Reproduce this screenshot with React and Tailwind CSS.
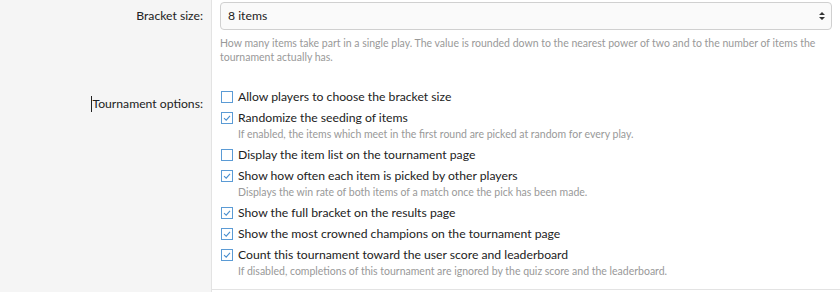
import React from "react";

const Check = ({ checked }) => (
  <span className="mt-[3px] flex h-[12px] w-[12px] shrink-0 items-center justify-center border border-[#5b9bd5] bg-white">
    {checked && (
      <svg width="8" height="8" viewBox="0 0 8 8">
        <path d="M1 4.2 L3.2 6.2 L7 1.8" fill="none" stroke="#4a8fcf" strokeWidth="1.1" />
      </svg>
    )}
  </span>
);

const Option = ({ checked, label, help }) => (
  <div className="flex gap-[5px]">
    <Check checked={checked} />
    <div className="flex flex-col">
      <span className="text-[12.2px] leading-[18px] text-[#222]">{label}</span>
      {help && <span className="pb-[2px] text-[10.5px] leading-[14px] text-[#999]">{help}</span>}
    </div>
  </div>
);

export default function App() {
  return (
    <div className="flex h-[292px] w-[840px] bg-white" style={{ fontFamily: 'Lato, "Open Sans", sans-serif' }}>
      <div className="flex w-[212px] shrink-0 flex-col border-r border-[#e3e3e3] bg-[#f5f5f5] pr-[8px] text-right text-[12.2px] text-[#222]">
        <div className="pt-[7px] leading-[18px]">Bracket size:</div>
        <div className="mt-[70px] flex justify-end leading-[18px]">
          <span className="mt-[1px] h-[16px] w-px bg-[#222]" />
          <span>Tournament options:</span>
        </div>
      </div>
      <div className="flex flex-1 flex-col">
        <div className="flex flex-col px-[8px] pt-[2px]">
          <div className="flex h-[28px] items-center justify-between rounded-[4px] border border-[#d0d0d0] bg-[#fafafa] pl-[7px] pr-[6px] text-[12.2px] text-[#222]">
            <span>8 items</span>
            <svg width="6" height="10" viewBox="0 0 6 10">
              <path d="M0 4 L3 1 L6 4 Z M0 6 L3 9 L6 6 Z" fill="#333" />
            </svg>
          </div>
          <div className="mt-[6px] text-[10.5px] leading-[14px] text-[#999]">
            How many items take part in a single play. The value is rounded down to the nearest power of two and to the number of items the tournament actually has.
          </div>
        </div>
        <div className="mt-[24px] flex flex-col gap-[3px] px-[9px]">
          <Option label="Allow players to choose the bracket size" />
          <Option checked label="Randomize the seeding of items" help="If enabled, the items which meet in the first round are picked at random for every play." />
          <Option label="Display the item list on the tournament page" />
          <Option checked label="Show how often each item is picked by other players" help="Displays the win rate of both items of a match once the pick has been made." />
          <Option checked label="Show the full bracket on the results page" />
          <Option checked label="Show the most crowned champions on the tournament page" />
          <Option checked label="Count this tournament toward the user score and leaderboard" help="If disabled, completions of this tournament are ignored by the quiz score and the leaderboard." />
        </div>
        <div className="mt-auto mb-[2px] border-b border-[#e3e3e3]" />
      </div>
    </div>
  );
}
